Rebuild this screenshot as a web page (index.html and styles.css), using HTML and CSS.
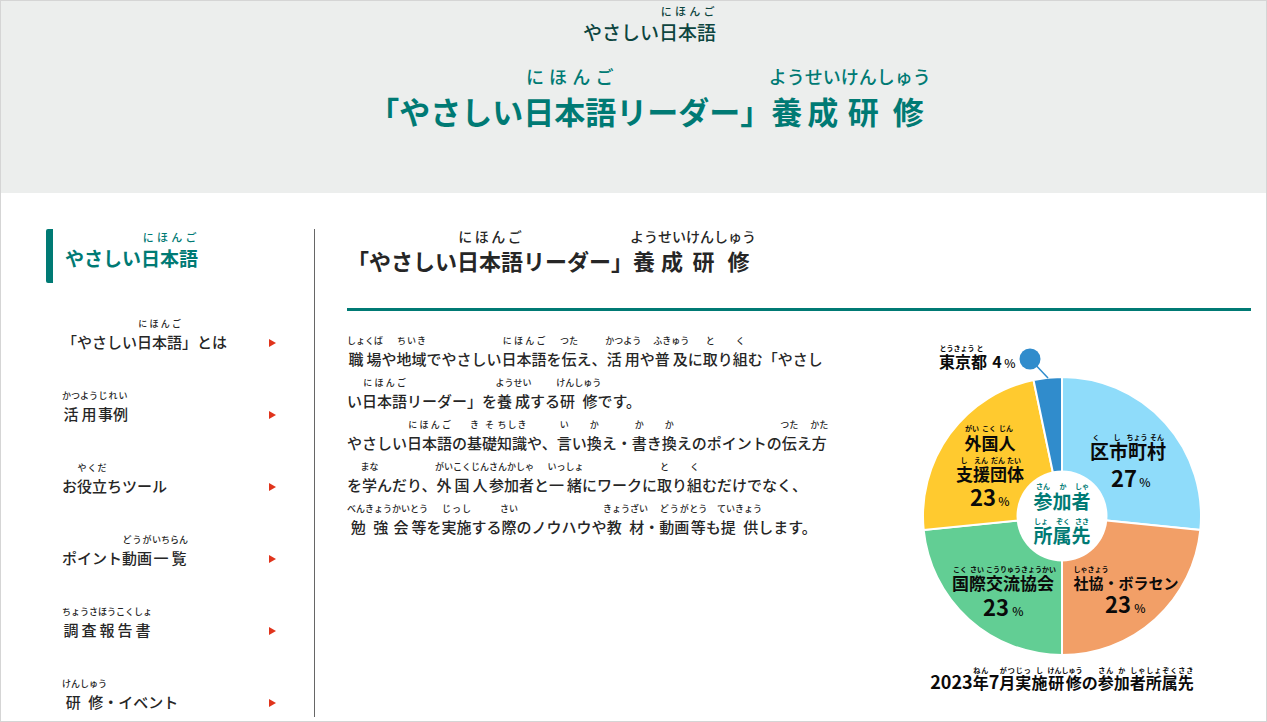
FILE: index.html
```html
<!DOCTYPE html>
<html lang="ja">
<head>
<meta charset="utf-8">
<meta name="viewport" content="width=device-width, initial-scale=1">
<title>「やさしい日本語リーダー」養成研修</title>
<link rel="stylesheet" href="styles.css">
</head>
<body>
<div class="page">
  <header class="hero">
    <p class="hero-sub">やさしい<ruby>日本語<rt>にほんご</rt></ruby></p>
    <h1 class="hero-title">「やさしい<ruby>日本語<rt>にほんご</rt></ruby>リーダー」<ruby>養成<rt>ようせい</rt></ruby><ruby>研修<rt>けんしゅう</rt></ruby></h1>
  </header>
  <div class="columns">
    <aside class="side">
      <h2 class="side-title">やさしい<ruby>日本語<rt>にほんご</rt></ruby></h2>
      <nav>
        <ul class="menu">
          <li><a href="#"><span>「やさしい<ruby>日本語<rt>にほんご</rt></ruby>」とは</span></a></li>
          <li><a href="#"><span><ruby>活用<rt>かつよう</rt></ruby><ruby>事例<rt>じれい</rt></ruby></span></a></li>
          <li><a href="#"><span>お<ruby>役立<rt>やくだ</rt></ruby>ちツール</span></a></li>
          <li><a href="#"><span>ポイント<ruby>動画<rt>どうが</rt></ruby><ruby>一覧<rt>いちらん</rt></ruby></span></a></li>
          <li><a href="#"><span><ruby>調査<rt>ちょうさ</rt></ruby><ruby>報告書<rt>ほうこくしょ</rt></ruby></span></a></li>
          <li><a href="#"><span><ruby>研修<rt>けんしゅう</rt></ruby>・イベント</span></a></li>
        </ul>
      </nav>
    </aside>
    <main class="main">
      <h2 class="main-title">「やさしい<ruby>日本語<rt>にほんご</rt></ruby>リーダー」<ruby>養成<rt>ようせい</rt></ruby><ruby>研修<rt>けんしゅう</rt></ruby></h2>
      <div class="content">
        <p class="lead"><ruby>職場<rt>しょくば</rt></ruby>や<ruby>地域<rt>ちいき</rt></ruby>でやさしい<ruby>日本語<rt>にほんご</rt></ruby>を<ruby>伝<rt>つた</rt></ruby>え、<ruby>活用<rt>かつよう</rt></ruby>や<ruby>普及<rt>ふきゅう</rt></ruby>に<ruby>取<rt>と</rt></ruby>り<ruby>組<rt>く</rt></ruby>む「やさしい<ruby>日本語<rt>にほんご</rt></ruby>リーダー」を<ruby>養成<rt>ようせい</rt></ruby>する<ruby>研修<rt>けんしゅう</rt></ruby>です。<br>やさしい<ruby>日本語<rt>にほんご</rt></ruby>の<ruby>基<rt>き</rt></ruby><ruby>礎<rt>そ</rt></ruby><ruby>知識<rt>ちしき</rt></ruby>や、<ruby>言<rt>い</rt></ruby>い<ruby>換<rt>か</rt></ruby>え・<ruby>書<rt>か</rt></ruby>き<ruby>換<rt>か</rt></ruby>えのポイントの<ruby>伝<rt>つた</rt></ruby>え<ruby>方<rt>かた</rt></ruby>を<ruby>学<rt>まな</rt></ruby>んだり、<ruby>外国人<rt>がいこくじん</rt></ruby><ruby>参加者<rt>さんかしゃ</rt></ruby>と<ruby>一緒<rt>いっしょ</rt></ruby>にワークに<ruby>取<rt>と</rt></ruby>り<ruby>組<rt>く</rt></ruby>むだけでなく、<ruby>勉強<rt>べんきょう</rt></ruby><ruby>会<rt>かい</rt></ruby><ruby>等<rt>とう</rt></ruby>を<ruby>実施<rt>じっし</rt></ruby>する<ruby>際<rt>さい</rt></ruby>のノウハウや<ruby>教材<rt>きょうざい</rt></ruby>・<ruby>動画<rt>どうが</rt></ruby><ruby>等<rt>とう</rt></ruby>も<ruby>提供<rt>ていきょう</rt></ruby>します。</p>
        <figure class="chart">
          <svg class="pie" viewBox="917 338 290 320" role="img" aria-label="参加者所属先">
            <g class="slices">
              <path fill="#8fdcfa" d="M1062 516V377A139 139 0 0 1 1200.3 530Z"/>
              <path fill="#f29f67" d="M1062 516L1200.3 530A139 139 0 0 1 1062 655Z"/>
              <path fill="#62ce94" d="M1062 516V655A139 139 0 0 1 923.7 530Z"/>
              <path fill="#ffca2f" d="M1062 516L923.7 530A139 139 0 0 1 1033.5 380Z"/>
              <path fill="#308ccc" d="M1062 516L1033.5 380A139 139 0 0 1 1062 377Z"/>
            </g>
            <circle cx="1062" cy="516" r="45.500" fill="#fff"/>
            <path d="M1030 359L1048 378" stroke="#308ccc" stroke-width="1.500"/>
            <circle cx="1030" cy="359" r="10.500" fill="#308ccc"/>

            <g class="kana">
              <text x="957" y="351">とうきょう</text><text x="980" y="351">と</text>
              <text x="1096" y="440">く</text><text x="1117" y="440">し</text><text x="1137" y="440">ちょう</text><text x="1157" y="440">そん</text>
              <text x="972" y="431">がい</text><text x="989" y="431">こく</text><text x="1006" y="431">じん</text>
              <text x="964" y="463">し</text><text x="981" y="463">えん</text><text x="998" y="463">だん</text><text x="1014" y="463">たい</text>
              <text x="960" y="572">こく</text><text x="977" y="572">さい</text><text x="1021" y="572">こうりゅうきょうかい</text>
              <text x="1091" y="572">しゃきょう</text>
            </g>
            <g class="kana teal">
              <text x="1043" y="489">さん</text><text x="1063" y="489">か</text><text x="1082" y="489">しゃ</text>
              <text x="1041" y="524">しょ</text><text x="1063" y="524">ぞく</text><text x="1082" y="524">さき</text>
            </g>

            <g class="label">
              <text class="s16" x="963" y="368">東京都</text>
              <text class="s19" x="1128" y="459">区市町村</text>
              <text class="s17" x="990" y="450">外国人</text>
              <text class="s17" x="990" y="481">支援団体</text>
              <text class="s17" x="1003" y="590">国際交流協会</text>
              <text class="s15" x="1126" y="589">社協・ボラセン</text>
              <text class="s19 teal" x="1062" y="509">参加者</text>
              <text class="s19 teal" x="1062" y="543">所属先</text>
            </g>
            <g class="label">
              <text class="s16" x="997" y="368">4</text>
              <text class="s22" x="1124" y="487">27</text>
              <text class="s22" x="983" y="506">23</text>
              <text class="s22" x="996" y="616">23</text>
              <text class="s22" x="1118" y="613">23</text>
            </g>
            <g class="percent">
              <text x="1010" y="368">%</text>
              <text x="1145" y="487">%</text>
              <text x="1004" y="506">%</text>
              <text x="1018" y="616">%</text>
              <text x="1140" y="613">%</text>
            </g>
          </svg>
          <figcaption class="caption"><span class="num">2023</span><ruby>年<rt>ねん</rt></ruby><span class="num">7</span><ruby>月<rt>がつ</rt></ruby><ruby>実<rt>じっ</rt></ruby><ruby>施<rt>し</rt></ruby><ruby>研修<rt>けんしゅう</rt></ruby>の<ruby>参<rt>さん</rt></ruby><ruby>加<rt>か</rt></ruby><ruby>者<rt>しゃ</rt></ruby><ruby>所<rt>しょ</rt></ruby><ruby>属<rt>ぞく</rt></ruby><ruby>先<rt>さき</rt></ruby></figcaption>
        </figure>
      </div>
    </main>
  </div>
</div>
</body>
</html>
```
FILE: styles.css
```css
* {
  box-sizing: border-box;
}

body,
h1,
h2,
p,
ul,
figure {
  margin: 0;
  padding: 0;
}

body {
  font-family: "Noto Sans CJK JP", sans-serif;
  font-size: 15px;
  font-weight: 500;
  color: #262626;
  background: #fff;
}

.page {
  min-height: 100vh;
  display: flex;
  flex-direction: column;
  border: 1px solid #d5d5d5;
}

rt {
  padding-bottom: 4px;
  font-size: 9px;
  font-weight: 500;
}

.hero {
  padding: 0 0 41px 32px;
  background: #eceeed;
  text-align: center;
}

.hero-sub {
  font-size: 19px;
  line-height: 62px;
  color: #0d453f;
}

.hero-sub rt,
.side-title rt {
  font-size: 11px;
}

.hero-title {
  font-size: 31px;
  line-height: 82px;
  color: #007a74;
}

.hero-title rt {
  padding-bottom: 7px;
  font-size: 18px;
}

.columns {
  flex: 1;
  display: flex;
  padding: 36px 15px 4px 45px;
}

.side {
  flex: none;
  width: 268px;
}

.side-title {
  padding-left: 12px;
  border-left: 7px solid #007a74;
  border-radius: 2px;
  font-size: 19px;
  line-height: 50px;
  color: #007a74;
}

.menu {
  display: flex;
  flex-direction: column;
  gap: 35px;
  list-style: none;
  padding: 34px 38px 0 16px;
}

.menu a {
  display: flex;
  align-items: flex-end;
  justify-content: space-between;
  line-height: 24px;
  color: inherit;
  text-decoration: none;
}

.menu a::after {
  content: "";
  margin-bottom: 7px;
  border: solid transparent;
  border-width: 4px 0 4px 7px;
  border-left-color: #e0341c;
}

.main {
  flex: 1;
  min-width: 0;
  padding-left: 32px;
  border-left: 1px solid #666;
}

.main-title {
  margin-top: -3px;
  padding-bottom: 17px;
  border-bottom: 3px solid #007a74;
  font-size: 22px;
  line-height: 62px;
}

.main-title rt {
  font-size: 14px;
}

.content {
  display: flex;
  gap: 42px;
  padding-top: 23px;
}

.lead {
  width: 484px;
  line-height: 42px;
}

.chart {
  flex: 1;
  display: flex;
  flex-direction: column;
  align-items: center;
  padding-top: 4px;
}

.pie {
  display: block;
  width: 290px;
}

.slices {
  stroke: #fff;
  stroke-width: 2px;
}

.pie text {
  text-anchor: middle;
}

.label {
  font-weight: 700;
  fill: #0a0a0a;
}

.kana {
  font-size: 7px;
  font-weight: 700;
  fill: #0a0a0a;
}

.percent {
  font-size: 12px;
  fill: #0a0a0a;
}

.s15 {
  font-size: 15px;
}

.s16 {
  font-size: 16px;
}

.s17 {
  font-size: 17px;
}

.s19 {
  font-size: 19px;
}

.s22 {
  font-size: 22px;
}

.teal {
  fill: #007a74;
}

.caption {
  font-size: 16px;
  font-weight: 700;
  line-height: 46px;
  white-space: nowrap;
  color: #0a0a0a;
}

.caption .num {
  font-size: 18px;
}

.caption rt {
  padding-bottom: 0;
  font-size: 7px;
  font-weight: 700;
}
```
